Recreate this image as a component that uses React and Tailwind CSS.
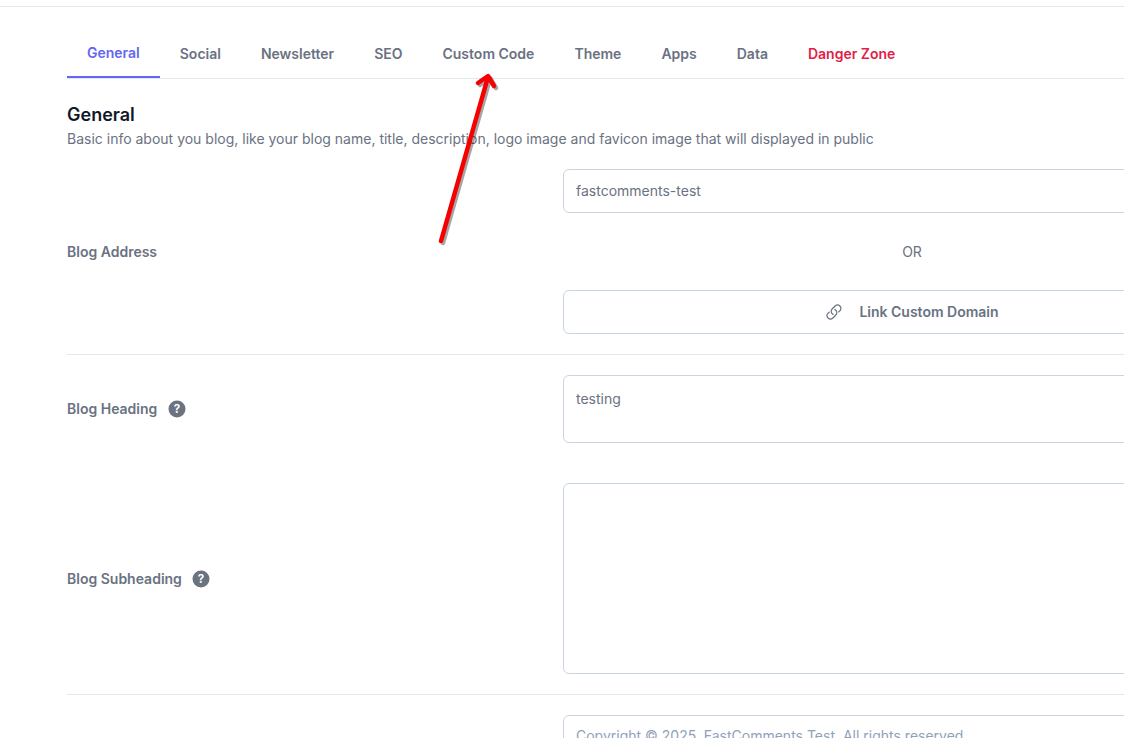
import React from 'react'

const tabs = ["General", "Social", "Newsletter", "SEO", "Custom Code", "Theme", "Apps", "Data"];

const HelpIcon = () => (
  <svg viewBox="0 0 18 18" className="h-[18px] w-[18px] shrink-0">
    <circle cx="9" cy="9" r="8.5" fill="#6b7280" />
    <text x="9" y="13" textAnchor="middle" fontSize="11.5" fontWeight="700" fill="#fff" fontFamily="Inter, sans-serif">?</text>
  </svg>
);

const LinkIcon = () => (
  <svg viewBox="0 0 24 24" className="h-[18px] w-[18px]" fill="none" stroke="#6b7280" strokeWidth="1.6" strokeLinecap="round" strokeLinejoin="round">
    <path d="M13.2 8.8a4.5 4.5 0 0 1 1.3 7.2l-4 4a4.5 4.5 0 0 1-6.4-6.4l1.6-1.5" />
    <path d="M10.8 15.2a4.5 4.5 0 0 1-1.3-7.2l4-4a4.5 4.5 0 0 1 6.4 6.4l-1.6 1.5" />
  </svg>
);

const Arrow = () => (
  <svg className="absolute left-[430px] top-[64px] h-[190px] w-[80px]" viewBox="0 0 80 190" fill="none" strokeLinecap="round" strokeLinejoin="round">
    {/* shadow */}
    <g stroke="#000" strokeOpacity="0.35" strokeWidth="4.5" transform="translate(2 2)">
      <path d="M11 177 L58 13" />
      <path d="M48 19 L58 12 L64 22" />
    </g>
    <g stroke="#f60000" strokeWidth="4.5">
      <path d="M11 177 L58 13" />
      <path d="M48 19 L58 12 L64 22" />
    </g>
  </svg>
);

const App = () => {
  return (
    <div className="relative h-[738px] w-[1124px] overflow-hidden bg-white font-['Inter',sans-serif]">
      <div className="h-[7px] border-b border-gray-200" />

      <div className="w-[1194px] ml-[67px] pt-[23px]">
        {/* Tabs */}
        <nav className="flex border-b border-gray-200 h-[49px] text-sm font-semibold text-gray-500">
          {tabs.map((tab, i) => (
            <a
              key={tab}
              href="#"
              className={i === 0
                ? "px-5 h-[48px] flex items-center border-b-2 border-[#6366f1] text-[#6366f1]"
                : "px-5 h-[48px] flex items-center"}
            >
              {tab}
            </a>
          ))}
          <a href="#" className="px-5 h-[48px] flex items-center text-[#e11d48]">Danger Zone</a>
        </nav>

        {/* Section header */}
        <div className="mt-[24px]">
          <h2 className="text-lg leading-[24px] font-semibold text-gray-900">General</h2>
          <p className="text-sm leading-[24px] text-gray-500">
            Basic info about you blog, like your blog name, title, description, logo image and favicon image that will displayed in public
          </p>
        </div>

        {/* Blog Address */}
        <div className="mt-[18px] flex items-center border-b border-gray-200 pb-[20px]">
          <div className="w-[496px] shrink-0 text-sm font-semibold text-gray-500">Blog Address</div>
          <div className="flex-1">
            <div className="h-[44px] rounded-md border border-slate-300 px-3 flex items-center text-sm text-gray-500">
              fastcomments-test
            </div>
            <div className="h-[77px] flex items-center justify-center text-sm text-gray-500">OR</div>
            <button className="w-full h-[44px] rounded-md border border-slate-300 flex items-center justify-center gap-[16px] text-sm font-semibold text-gray-500">
              <LinkIcon />
              Link Custom Domain
            </button>
          </div>
        </div>

        {/* Blog Heading */}
        <div className="mt-[20px] flex items-center">
          <div className="w-[496px] shrink-0 flex items-center gap-[11px] text-sm font-semibold text-gray-500">
            Blog Heading
            <HelpIcon />
          </div>
          <div className="flex-1 h-[68px] rounded-md border border-slate-300 px-3 pt-[13px] text-sm leading-[20px] text-gray-500">
            testing
          </div>
        </div>

        {/* Blog Subheading */}
        <div className="mt-[40px] flex items-center border-b border-gray-200 pb-[20px]">
          <div className="w-[496px] shrink-0 flex items-center gap-[10px] text-sm font-semibold text-gray-500">
            Blog Subheading
            <HelpIcon />
          </div>
          <div className="flex-1 h-[191px] rounded-md border border-slate-300" />
        </div>

        {/* Footer text */}
        <div className="mt-[20px] flex">
          <div className="w-[496px] shrink-0" />
          <div className="flex-1 h-[68px] rounded-md border border-slate-300 px-3 pt-[10px] text-sm leading-[20px] text-slate-400">
            Copyright © 2025. FastComments Test. All rights reserved.
          </div>
        </div>
      </div>

      <Arrow />
    </div>
  )
}

export default App
